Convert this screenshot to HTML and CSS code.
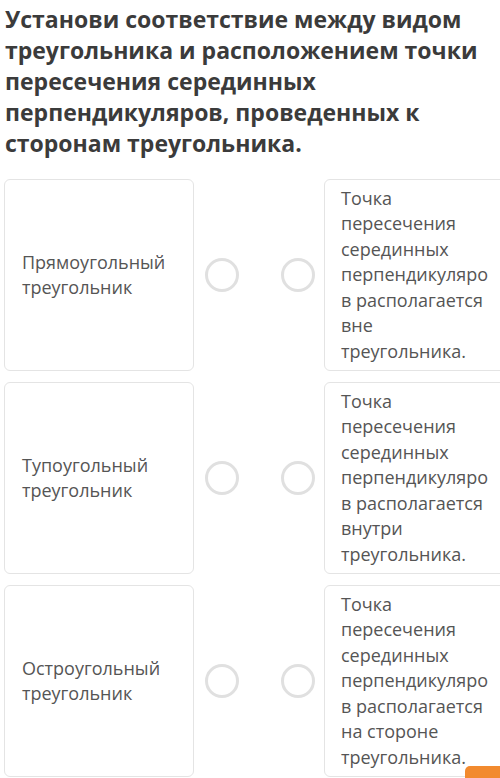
FILE: index.html
```html
<!DOCTYPE html>
<html lang="ru">
<head>
    <meta charset="UTF-8">
    <meta name="viewport" content="width=device-width, initial-scale=1.0">
    <title>Установи соответствие</title>
    <link rel="stylesheet" href="styles.css">
</head>
<body>
    <h1 class="question">Установи соответствие между видом треугольника и расположением точки пересечения серединных перпендикуляров, проведенных к сторонам треугольника.</h1>

    <div class="pairs">
        <div class="pair">
            <div class="card card-left">Прямоугольный треугольник</div>
            <span class="dot"></span>
            <span class="dot"></span>
            <div class="card card-right">Точка пересечения серединных перпендикуляров располагается вне треугольника.</div>
        </div>

        <div class="pair">
            <div class="card card-left">Тупоугольный треугольник</div>
            <span class="dot"></span>
            <span class="dot"></span>
            <div class="card card-right">Точка пересечения серединных перпендикуляров располагается внутри треугольника.</div>
        </div>

        <div class="pair">
            <div class="card card-left">Остроугольный треугольник</div>
            <span class="dot"></span>
            <span class="dot"></span>
            <div class="card card-right">Точка пересечения серединных перпендикуляров располагается на стороне треугольника.</div>
        </div>
    </div>

    <div class="next-btn"></div>
</body>
</html>
```

FILE: styles.css
```css
body {
    font-family: "Open Sans", "Noto Sans", sans-serif;
    background-color: #fff;
    margin: 0;
    padding: 0;
    width: 500px;
    height: 778px;
    overflow: hidden;
    position: relative;
}

.question {
    margin: 0;
    padding: 4px 5px 0 5px;
    font-size: 23px;
    line-height: 31px;
    font-weight: 700;
    color: #3b3b3b;
}

.pairs {
    margin-top: 20px;
    display: flex;
    flex-direction: column;
    gap: 11px;
}

.pair {
    display: flex;
    align-items: center;
    height: 192px;
    padding-left: 4px;
}

.card {
    box-sizing: border-box;
    height: 100%;
    border: 1.5px solid #e4e4e4;
    border-radius: 6px;
    background-color: #fff;
    display: flex;
    align-items: center;
    font-size: 18px;
    line-height: 25.5px;
    color: #555;
}

.card-left {
    width: 190px;
    flex-shrink: 0;
    padding: 0 17px;
}

.card-right {
    width: 185px;
    flex-shrink: 0;
    padding: 0 16px;
    margin-left: 9px;
    overflow-wrap: anywhere;
}

.dot {
    box-sizing: border-box;
    width: 34px;
    height: 34px;
    flex-shrink: 0;
    border: 3px solid #e0e0e0;
    border-radius: 50%;
    margin-left: 11px;
}

.dot + .dot {
    margin-left: 42px;
}

.next-btn {
    position: absolute;
    right: 0;
    bottom: 0;
    width: 35px;
    height: 12px;
    background-color: #f28a2e;
    border-top-left-radius: 5px;
}
```
